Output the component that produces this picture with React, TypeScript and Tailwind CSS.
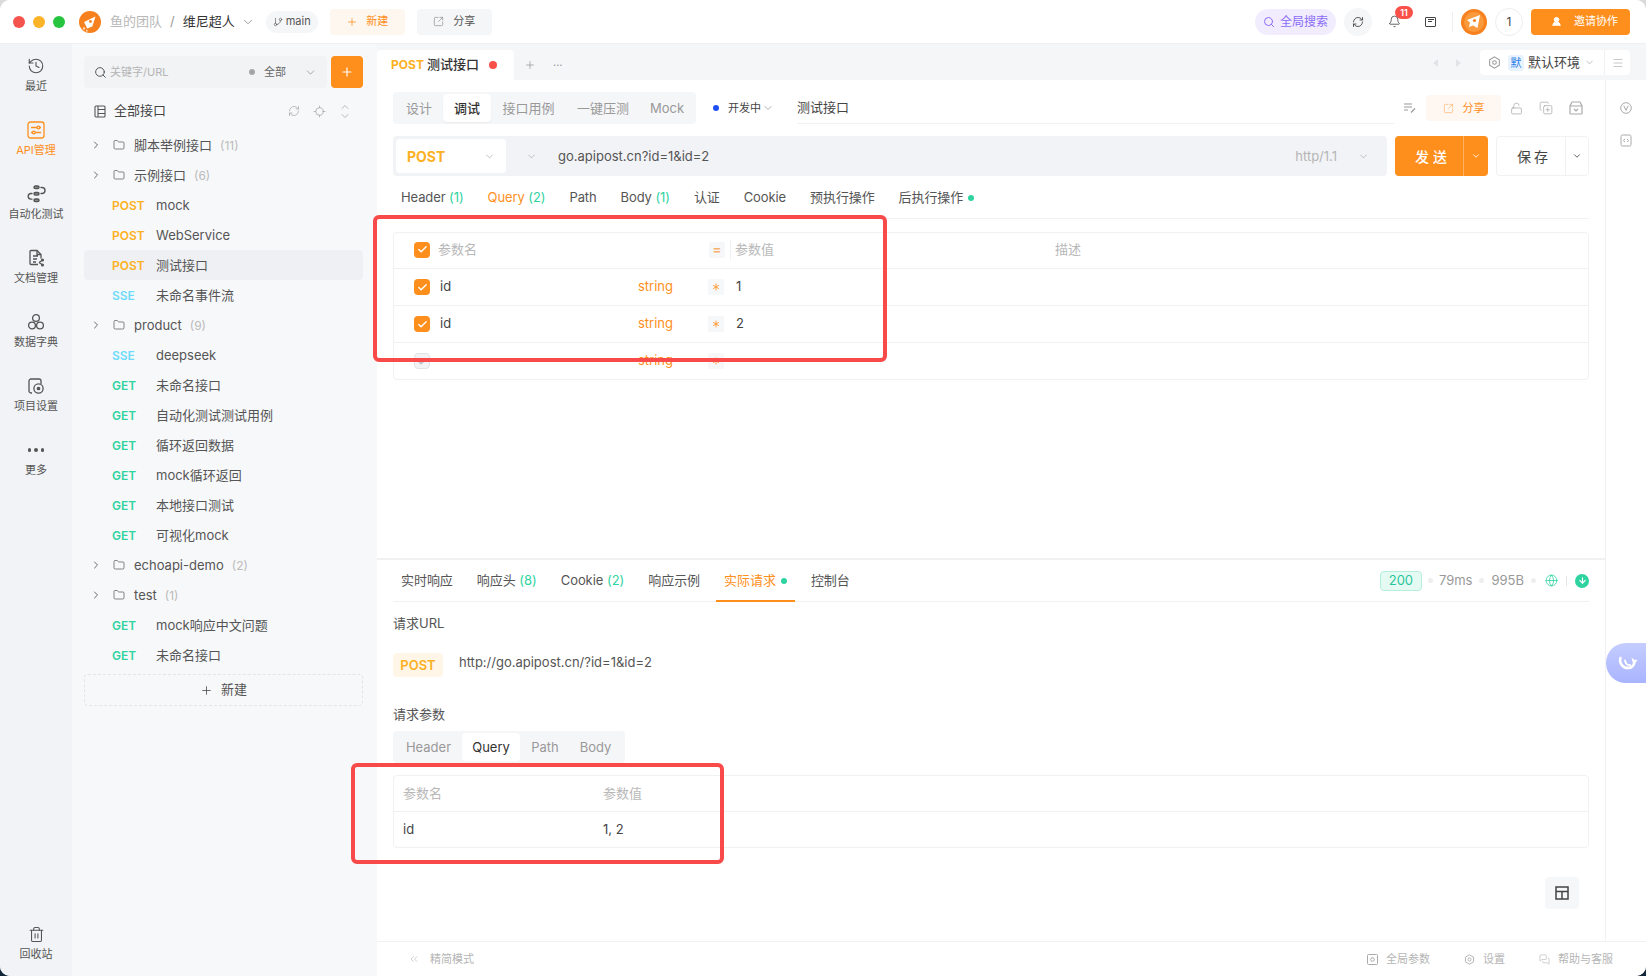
import {
  Asterisk, Bell, Check, ChevronDown, ChevronRight, ChevronsLeft, ChevronUp, CopyPlus, Folder, GitBranch, Globe, History,
  LockOpen, Menu, MessagesSquare, Plus, RefreshCw, Search, SquareArrowOutUpRight, Trash2, ArrowDown, Locate, UserRound,
} from 'lucide-react';

const ORANGE = 'bg-[#ff8f1c]';

const Logo = ({ size = 22 }: { size?: number }) => (
  <svg width={size} height={size} viewBox="0 0 24 24">
    <circle cx="12" cy="12" r="12" fill="#f7811e" />
    <path d="M18 6 L14.500 17 L9 19 L5.500 12 Z" fill="#fff" />
    <circle cx="12.500" cy="11.500" r="1.600" fill="#f7811e" />
    <circle cx="5.500" cy="19" r="1.300" fill="#ffd9b3" />
    <circle cx="8.500" cy="21.500" r="1.100" fill="#ffd9b3" />
  </svg>
);

const Avatar = () => (
  <svg width="26" height="26" viewBox="0 0 26 26">
    <circle cx="13" cy="13" r="13" fill="#f7811e" />
    <circle cx="13" cy="13" r="10" fill="#fb9a3c" />
    <path d="M19 6 L16.500 19 L12 16.500 L8 18 L9 13.500 L6 11 Z" fill="#fff" />
    <circle cx="13.500" cy="11.500" r="1.600" fill="#f7811e" />
  </svg>
);

const ApiIcon = () => (
  <svg width="18" height="18" viewBox="0 0 18 18" fill="none" stroke="#ff8f1c" strokeWidth="1.3">
    <rect x="1" y="1" width="16" height="16" rx="2.5" />
    <path d="M4 6.5h6M12.8 6.5H14M4 11.5h1.4M8.2 11.5H14" />
    <circle cx="11.4" cy="6.5" r="1.4" />
    <circle cx="6.8" cy="11.5" r="1.4" />
  </svg>
);

const AutoIcon = () => (
  <svg width="20" height="18" viewBox="0 0 20 18" fill="none" stroke="#555" strokeWidth="1.4" strokeLinecap="round">
    <rect x="8" y="1" width="5" height="2.6" rx="1.3" fill="#888" />
    <rect x="8" y="7.5" width="5" height="2.6" rx="1.3" fill="#888" />
    <rect x="8" y="14" width="5" height="2.6" rx="1.3" fill="#888" />
    <path d="M6 8.5H5a2.8 2.8 0 0 0 0 5.6h1M15 2.5h1a3 3 0 0 1 0 6h-1" />
  </svg>
);

const DocIcon = () => (
  <svg width="18" height="18" viewBox="0 0 18 18" fill="none" stroke="#555" strokeWidth="1.3">
    <path d="M11 15.500H4a1 1 0 0 1-1-1v-12a1 1 0 0 1 1-1h6l4 4v4" />
    <path d="M10 1.500v4h4M6 7h5M6 10h4M6 13h3" />
    <path d="M12 13.500l3-2M12 13.500l3 2" />
    <circle cx="15.500" cy="11" r="0.900" fill="#555" />
    <circle cx="15.500" cy="16" r="0.900" fill="#555" />
  </svg>
);

const DictIcon = () => (
  <svg width="18" height="18" viewBox="0 0 18 18" fill="none" stroke="#555" strokeWidth="1.3">
    <circle cx="9" cy="5" r="3.4" />
    <circle cx="5" cy="12.5" r="3.4" />
    <circle cx="13" cy="12.5" r="3.4" />
  </svg>
);

const ProjectIcon = () => (
  <svg width="18" height="18" viewBox="0 0 18 18" fill="none" stroke="#555" strokeWidth="1.3">
    <path d="M5 16H4a2 2 0 0 1-2-2V4a2 2 0 0 1 2-2h8a2 2 0 0 1 2 2v3" />
    <circle cx="11.5" cy="11.5" r="4.6" />
    <circle cx="11.5" cy="11.5" r="1.2" fill="#555" />
  </svg>
);

const AllApis = () => (
  <svg width="12" height="13" viewBox="0 0 12 13" fill="none" stroke="#555" strokeWidth="1.1">
    <rect x="1" y="1" width="10" height="11" rx="1" />
    <path d="M4 1v11M4 4.5h7M4 8.5h7" />
  </svg>
);

const EditLines = () => (
  <svg width="14" height="12" viewBox="0 0 14 12" fill="none" stroke="#999" strokeWidth="1.2">
    <path d="M1 2h8M1 5h8M1 8h4M8 10.5l4-4" />
  </svg>
);

const ArchiveCheck = () => (
  <svg width="14" height="14" viewBox="0 0 14 14" fill="none" stroke="#aaa" strokeWidth="1.2">
    <path d="M3 1h8l2 4v7a1 1 0 0 1-1 1H2a1 1 0 0 1-1-1V5zM1 5h12M5 8l2 2 2-2" />
  </svg>
);

const HexDot = ({ size = 13, color = '#999' }: { size?: number; color?: string }) => (
  <svg width={size} height={size} viewBox="0 0 14 14" fill="none" stroke={color} strokeWidth="1.1">
    <path d="M7 1l5.2 3v6L7 13l-5.2-3V4z" />
    <circle cx="7" cy="7" r="2" />
  </svg>
);

const VCircle = () => (
  <svg width="12" height="12" viewBox="0 0 12 12" fill="none" stroke="#aaa" strokeWidth="1">
    <circle cx="6" cy="6" r="5.3" />
    <path d="M3.8 3.6L6 8.4l2.2-4.8" />
  </svg>
);

const CodeBox = () => (
  <svg width="12" height="13" viewBox="0 0 12 13" fill="none" stroke="#aaa" strokeWidth="1">
    <rect x="1" y="1" width="10" height="11" rx="1.5" />
    <path d="M5 5L3.4 6.5 5 8M7 5l1.6 1.5L7 8" />
  </svg>
);

const ParamsIcon = () => (
  <svg width="11" height="11" viewBox="0 0 11 11" fill="none" stroke="#aaa" strokeWidth="1">
    <rect x="0.5" y="0.5" width="10" height="10" rx="1" />
    <circle cx="5.5" cy="5.5" r="1.8" />
  </svg>
);

const Whale = () => (
  <svg width="20" height="16" viewBox="0 0 20 16" fill="none">
    <path d="M2.500 3c-1.500 5 2 10 7.500 10 3.500 0 6-2.500 6.500-6.500" stroke="#fff" strokeWidth="2.600" strokeLinecap="round" />
    <path d="M7 5.500c.5 3 2.500 5 5 4.500" stroke="#fff" strokeWidth="1.800" strokeLinecap="round" />
    <path d="M14.500 7 L13.500 2.500 L16.500 5 L19.500 4.500 L17.500 8 Z" fill="#fff" />
  </svg>
);

const Layout = () => (
  <svg width="14" height="14" viewBox="0 0 14 14" fill="none" stroke="#444" strokeWidth="1.5">
    <rect x="1" y="1" width="12" height="12" />
    <path d="M1 5.5h12M7 5.5V13" />
  </svg>
);

const railItems = [
  { label: '最近', icon: <History size={18} strokeWidth={1.5} color="#555" /> },
  { label: 'API管理', icon: <ApiIcon />, active: true },
  { label: '自动化测试', icon: <AutoIcon /> },
  { label: '文档管理', icon: <DocIcon /> },
  { label: '数据字典', icon: <DictIcon /> },
  { label: '项目设置', icon: <ProjectIcon /> },
  { label: '更多', icon: <span className="flex gap-[3px]"><i className="w-[3.5px] h-[3.5px] rounded-full bg-[#555]" /><i className="w-[3.5px] h-[3.5px] rounded-full bg-[#555]" /><i className="w-[3.5px] h-[3.5px] rounded-full bg-[#555]" /></span> },
];

type TreeRow =
  | { kind: 'folder'; name: string; count: number }
  | { kind: 'api'; method: 'POST' | 'GET' | 'SSE'; name: string; active?: boolean };

const tree: TreeRow[] = [
  { kind: 'folder', name: '脚本举例接口', count: 11 },
  { kind: 'folder', name: '示例接口', count: 6 },
  { kind: 'api', method: 'POST', name: 'mock' },
  { kind: 'api', method: 'POST', name: 'WebService' },
  { kind: 'api', method: 'POST', name: '测试接口', active: true },
  { kind: 'api', method: 'SSE', name: '未命名事件流' },
  { kind: 'folder', name: 'product', count: 9 },
  { kind: 'api', method: 'SSE', name: 'deepseek' },
  { kind: 'api', method: 'GET', name: '未命名接口' },
  { kind: 'api', method: 'GET', name: '自动化测试测试用例' },
  { kind: 'api', method: 'GET', name: '循环返回数据' },
  { kind: 'api', method: 'GET', name: 'mock循环返回' },
  { kind: 'api', method: 'GET', name: '本地接口测试' },
  { kind: 'api', method: 'GET', name: '可视化mock' },
  { kind: 'folder', name: 'echoapi-demo', count: 2 },
  { kind: 'folder', name: 'test', count: 1 },
  { kind: 'api', method: 'GET', name: 'mock响应中文问题' },
  { kind: 'api', method: 'GET', name: '未命名接口' },
];

const methodColor = { POST: 'text-[#fdb022]', GET: 'text-[#2fd3a0]', SSE: 'text-[#6ddcfb]' };

const TopBar = () => (
  <header className="h-[44px] shrink-0 flex items-center border-b border-[#eff0f2] bg-white pl-[13px] pr-4">
    <div className="flex gap-[8px]">
      <span className="w-3 h-3 rounded-full bg-[#f4544d]" />
      <span className="w-3 h-3 rounded-full bg-[#fbb328]" />
      <span className="w-3 h-3 rounded-full bg-[#27c43f]" />
    </div>
    <span className="ml-[14px]"><Logo /></span>
    <span className="ml-[9px] text-[13px] text-[#b8b8b8]">鱼的团队</span>
    <span className="ml-[8px] text-[13px] text-[#999]">/</span>
    <span className="ml-[8px] text-[13px] text-[#333]">维尼超人</span>
    <ChevronDown size={14} strokeWidth={1.4} color="#888" className="ml-[6px]" />
    <div className="ml-[11px] h-[22px] w-[52px] rounded-full bg-[#f5f6f8] flex items-center pl-[7px] gap-[3px] text-[11px] text-[#555]">
      <GitBranch size={10} strokeWidth={1.5} />main
    </div>
    <div className="ml-[12px] h-[26px] w-[75px] rounded bg-[#fef7ef] flex items-center justify-center gap-[8px] text-[11px] text-[#ff8f1c]">
      <Plus size={12} strokeWidth={1.5} />新建
    </div>
    <div className="ml-[12px] h-[26px] w-[75px] rounded bg-[#f5f6f8] flex items-center justify-center gap-[9px] text-[11px] text-[#555]">
      <SquareArrowOutUpRight size={11} strokeWidth={1.4} color="#888" />分享
    </div>
    <div className="flex-1" />
    <div className="h-[26px] w-[81px] rounded-full bg-[#f1edfe] flex items-center justify-center gap-[5px] text-[12px] text-[#8b6cf6]">
      <Search size={12} strokeWidth={2} />全局搜索
    </div>
    <div className="ml-[8px] w-7 h-7 rounded-full bg-[#f5f6f8] flex items-center justify-center">
      <RefreshCw size={12} strokeWidth={1.6} color="#333" />
    </div>
    <div className="relative ml-[14px] w-[16px] flex justify-center">
      <Bell size={13} strokeWidth={1.4} color="#333" />
      <span className="absolute left-[9px] -top-[9px] h-[13px] w-[18px] rounded-full bg-[#f9514a] text-white text-[9px] leading-[13px] text-center font-semibold">11</span>
    </div>
    <div className="ml-[23px] w-[11px] h-[10px] border border-[#444] rounded-[1px] flex flex-col gap-[1px] p-[1.5px]">
      <i className="h-px bg-[#444]" /><i className="h-px w-2/3 bg-[#444]" />
    </div>
    <div className="ml-[16px] h-5 w-px bg-[#eee]" />
    <span className="ml-[8px]"><Avatar /></span>
    <div className="ml-[8px] w-7 h-7 rounded-full border border-[#eee] flex items-center justify-center text-[12px] text-[#444]">1</div>
    <div className={`ml-[8px] h-[26px] w-[99px] rounded ${ORANGE} flex items-center pl-[20px] gap-[12px] text-[11px] text-white`}>
      <UserRound size={11} strokeWidth={2} fill="#fff" />邀请协作
    </div>
  </header>
);

const Rail = () => (
  <nav className="w-[72px] shrink-0 bg-[#f1f3f6] flex flex-col justify-between pt-[12px] pb-[14px]">
    <div>
      {railItems.map((item) => (
        <div key={item.label} className="h-16 flex flex-col items-center">
          <div className="h-5 flex items-center justify-center">{item.icon}</div>
          <span className={`mt-[2px] leading-4 text-[11px] ${item.active ? 'text-[#ff8f1c]' : 'text-[#555]'}`}>{item.label}</span>
        </div>
      ))}
    </div>
    <div className="flex flex-col items-center">
      <div className="h-5 flex items-center justify-center"><Trash2 size={17} strokeWidth={1.5} color="#555" /></div>
      <span className="mt-[2px] leading-4 text-[11px] text-[#555]">回收站</span>
    </div>
  </nav>
);

const Tree = () => (
  <aside className="w-[305px] shrink-0 bg-[#f7f8fa] pt-3 pl-3 pr-[14px]">
    <div className="flex gap-1">
      <div className="flex-1 h-8 rounded bg-[#f2f3f5] flex items-center pl-[10px] pr-[10px]">
        <Search size={13} strokeWidth={1.6} color="#444" />
        <span className="ml-[3px] pt-px text-[11px] text-[#b5b5b5]">关键字/URL</span>
        <span className="ml-auto w-[6px] h-[6px] rounded-full bg-[#a5a5a5]" />
        <span className="ml-[9px] pt-px text-[11px] text-[#666]">全部</span>
        <ChevronDown size={13} strokeWidth={1.3} color="#888" className="ml-[18px]" />
      </div>
      <div className={`w-8 h-8 rounded ${ORANGE} flex items-center justify-center`}>
        <Plus size={14} strokeWidth={2} color="#fff" />
      </div>
    </div>
    <div className="mt-2 h-[30px] flex items-center pl-[10px] pr-[12px]">
      <AllApis />
      <span className="ml-[8px] text-[13px] text-[#444]">全部接口</span>
      <RefreshCw size={12} strokeWidth={1.5} color="#aaa" className="ml-auto" />
      <Locate size={13} strokeWidth={1.5} color="#aaa" className="ml-[13px]" />
      <span className="ml-[13px] flex flex-col -space-y-[3px]">
        <ChevronUp size={12} strokeWidth={1.6} color="#aaa" />
        <ChevronDown size={12} strokeWidth={1.6} color="#aaa" />
      </span>
    </div>
    <div className="mt-1">
      {tree.map((row, i) =>
        row.kind === 'folder' ? (
          <div key={i} className="h-[30px] flex items-center pl-[6px]">
            <ChevronRight size={12} strokeWidth={1.6} color="#444" />
            <Folder size={12} strokeWidth={1.4} color="#555" className="ml-[11px]" />
            <span className="ml-[9px] pt-px text-[13px] text-[#555]">{row.name}</span>
            <span className="ml-[8px] pt-px text-[12px] text-[#bbb]">({row.count})</span>
          </div>
        ) : (
          <div key={i} className={`h-[30px] flex items-center pl-7 pt-px rounded ${row.active ? 'bg-[#eef0f3]' : ''}`}>
            <span className={`w-[44px] text-[12px] font-semibold ${methodColor[row.method]}`}>{row.method}</span>
            <span className="text-[13px] text-[#555]">{row.name}</span>
          </div>
        ),
      )}
    </div>
    <div className="mt-1 h-8 rounded border border-dashed border-[#e4e5e8] flex items-center justify-center gap-2 text-[13px] text-[#555]">
      <Plus size={13} strokeWidth={1.6} />新建
    </div>
  </aside>
);

const Small = ({ children }: { children: React.ReactNode }) => <span className="text-[#2fd3a0]"> {children}</span>;

const Dot = () => <span className="w-[6px] h-[6px] rounded-full bg-[#2fd3a0] inline-block" />;

const paramTabs: { label: string; n?: number; active?: boolean; dot?: boolean }[] = [
  { label: 'Header', n: 1 },
  { label: 'Query', n: 2, active: true },
  { label: 'Path' },
  { label: 'Body', n: 1 },
  { label: '认证' },
  { label: 'Cookie' },
  { label: '预执行操作' },
  { label: '后执行操作', dot: true },
];

const respTabs: { label: string; n?: number; active?: boolean; dot?: boolean }[] = [
  { label: '实时响应' },
  { label: '响应头', n: 8 },
  { label: 'Cookie', n: 2 },
  { label: '响应示例' },
  { label: '实际请求', active: true, dot: true },
  { label: '控制台' },
];

const CheckBox = ({ off }: { off?: boolean }) => (
  <span className={`w-4 h-4 rounded-[4px] flex items-center justify-center ${off ? 'bg-[#f2f3f5] border border-[#e2e3e6]' : ORANGE}`}>
    <Check size={11} strokeWidth={3} color={off ? '#bbb' : '#fff'} />
  </span>
);

const Star = () => (
  <span className="w-4 h-4 rounded-[2px] bg-[#f6f7f9] flex items-center justify-center">
    <Asterisk size={12} strokeWidth={1.6} color="#ff8f1c" />
  </span>
);

const ParamRow = ({ value, off }: { value?: string; off?: boolean }) => (
  <div className="h-[37px] flex items-center border-t border-[#f0f1f3]">
    <div className="w-[244px] pl-5 flex items-center">
      <CheckBox off={off} />
      {value && <span className="ml-[10px] text-[13px] text-[#444]">id</span>}
    </div>
    <span className="w-[70px] text-[13px] text-[#ff8f1c]">string</span>
    <Star />
    <span className="ml-3 text-[13px] text-[#444]">{value}</span>
  </div>
);

const RequestPanel = () => (
  <section className="h-[478px] shrink-0 px-4 pt-3">
    <div className="h-8 flex items-center">
      <div className="h-8 w-[303px] rounded bg-[#f5f6f8] p-[2px] flex text-[13px] text-[#999] text-center leading-7">
        <span className="w-[48px]">设计</span>
        <span className="w-[48px] bg-white rounded text-[#333] font-medium shadow-[0_1px_2px_rgba(0,0,0,0.05)]">调试</span>
        <span className="w-[75px]">接口用例</span>
        <span className="w-[74px]">一键压测</span>
        <span className="w-[54px]">Mock</span>
      </div>
      <span className="ml-[17px] w-[6px] h-[6px] rounded-full bg-[#1f4ff2]" />
      <span className="ml-[9px] text-[11px] text-[#444]">开发中</span>
      <ChevronDown size={12} strokeWidth={1.3} color="#888" className="ml-[1px]" />
      <div className="ml-[23px] w-[597px] h-8 flex items-center border-b border-[#f0f1f3] text-[13px] text-[#444]">测试接口</div>
      <span className="ml-[9px]"><EditLines /></span>
      <div className="ml-[9px] w-[75px] h-[26px] rounded bg-[#fef7f2] flex items-center justify-center gap-[9px] text-[11px] text-[#ff8f1c]">
        <SquareArrowOutUpRight size={11} strokeWidth={1.4} color="#ffb066" />分享
      </div>
      <LockOpen size={13} strokeWidth={1.4} color="#aaa" className="ml-[9px]" />
      <CopyPlus size={14} strokeWidth={1.3} color="#aaa" className="ml-[16px]" />
      <span className="ml-[16px]"><ArchiveCheck /></span>
    </div>

    <div className="mt-3 flex h-10">
      <div className="w-[994px] rounded bg-[#f2f3f6] flex items-center pl-[3px] pr-[18px]">
        <div className="w-[110px] h-[34px] rounded bg-white flex items-center pl-[11px] pr-[11px]">
          <span className="text-[14px] font-bold text-[#fdb022]">POST</span>
          <ChevronDown size={11} strokeWidth={1.3} color="#999" className="ml-auto" />
        </div>
        <ChevronDown size={11} strokeWidth={1.3} color="#999" className="ml-[20px]" />
        <span className="ml-[21px] pt-px text-[13px] text-[#555]">go.apipost.cn?id=1&amp;id=2</span>
        <span className="ml-auto pt-px text-[13px] text-[#b5b5b5]">http/1.1</span>
        <ChevronDown size={11} strokeWidth={1.3} color="#999" className="ml-[21px]" />
      </div>
      <div className={`ml-2 w-[93px] rounded ${ORANGE} flex text-white`}>
        <span className="w-[69px] pl-[8px] flex items-center justify-center text-[14px] tracking-[4px] font-medium border-r border-[#ffb060]">发送</span>
        <span className="flex-1 flex items-center justify-center"><ChevronDown size={10} strokeWidth={2} /></span>
      </div>
      <div className="ml-2 w-[93px] rounded border border-[#f0f1f3] flex text-[#444]">
        <span className="w-[69px] pl-[6px] flex items-center justify-center text-[14px] tracking-[3px] border-r border-[#f0f1f3]">保存</span>
        <span className="flex-1 flex items-center justify-center"><ChevronDown size={10} strokeWidth={2} /></span>
      </div>
    </div>

    <div className="h-[43px] pt-px flex items-center gap-2 border-b border-[#f0f1f3] tracking-[-0.1px]">
      {paramTabs.map((t) => (
        <div key={t.label} className={`px-2 text-[13px] flex items-center gap-[5px] whitespace-pre ${t.active ? 'text-[#ff8f1c]' : 'text-[#555]'}`}>
          <span>{t.label}{t.n !== undefined && <Small>({t.n})</Small>}</span>
          {t.dot && <Dot />}
        </div>
      ))}
    </div>

    <div className="mt-[13px] rounded border border-[#f0f1f3]">
      <div className="h-[35px] pb-[2px] flex items-center">
        <div className="w-[244px] pl-5 flex items-center">
          <CheckBox />
          <span className="ml-[8px] text-[13px] text-[#b8b8b8]">参数名</span>
        </div>
        <span className="w-[71px]" />
        <span className="w-4 h-4 rounded-[2px] bg-[#f6f7f9] flex items-center justify-center text-[13px] font-bold text-[#f7b06c]">=</span>
        <span className="ml-[5px] h-5 w-px bg-[#f0f1f3]" />
        <span className="ml-[4px] w-[320px] text-[13px] text-[#b8b8b8]">参数值</span>
        <span className="text-[13px] text-[#b8b8b8]">描述</span>
      </div>
      <ParamRow value="1" />
      <ParamRow value="2" />
      <ParamRow off />
    </div>
  </section>
);

const ResponsePanel = () => (
  <section className="flex-1 border-t-2 border-[#f0f1f3] px-4 relative">
    <div className="h-[42px] flex items-stretch gap-2 border-b border-[#f0f1f3] tracking-[-0.05px]">
      {respTabs.map((t) => (
        <div key={t.label} className={`px-2 pt-px text-[13px] flex items-center gap-[5px] whitespace-pre -mb-px border-b-2 ${t.active ? 'text-[#ff8f1c] border-[#ff8f1c]' : 'text-[#555] border-transparent'}`}>
          <span>{t.label}{t.n !== undefined && <Small>({t.n})</Small>}</span>
          {t.dot && <Dot />}
        </div>
      ))}
      <div className="ml-auto flex items-center text-[13px] text-[#999] tracking-normal">
        <span className="w-[42px] h-5 rounded bg-[#e6faf4] border border-[#b5efdc] text-[#28c79b] flex items-center justify-center">200</span>
        <span className="ml-[6px] mr-[6px] w-[5px] h-[5px] rounded-full bg-[#eee]" />79ms
        <span className="mx-[7px] w-[5px] h-[5px] rounded-full bg-[#eee]" />995B
        <span className="ml-[7px] mr-[9px] w-[5px] h-[5px] rounded-full bg-[#eee]" />
        <Globe size={13} strokeWidth={1.5} color="#2fd3a0" />
        <span className="ml-[8px] h-[10px] w-px bg-[#e5e5e5]" />
        <span className="ml-[8px] w-[14px] h-[14px] rounded-full bg-[#2fd3a0] flex items-center justify-center"><ArrowDown size={9} strokeWidth={3} color="#fff" /></span>
      </div>
    </div>

    <div className="mt-[11px] leading-5 text-[13px] text-[#555]">请求URL</div>
    <div className="mt-5 flex">
      <span className="w-[50px] h-6 rounded bg-[#fff6e8] text-[13px] leading-6 font-semibold text-center text-[#fdb022]">POST</span>
      <span className="ml-4 -mt-[3px] leading-6 text-[13px] text-[#555]">http://go.apipost.cn/?id=1&amp;id=2</span>
    </div>
    <div className="mt-[27px] leading-5 text-[13px] text-[#555]">请求参数</div>
    <div className="mt-[7px] h-8 w-[232px] rounded bg-[#f5f6f8] p-[2px] flex text-[13px] text-[#999] text-center leading-7">
      <span className="w-[67px]">Header</span>
      <span className="w-[58px] bg-white rounded text-[#333]">Query</span>
      <span className="w-[50px]">Path</span>
      <span className="w-[51px]">Body</span>
    </div>
    <div className="mt-3 rounded border border-[#f0f1f3] text-[13px]">
      <div className="h-[35px] flex items-center pl-[9px] text-[#b8b8b8]">
        <span className="w-[200px]">参数名</span>参数值
      </div>
      <div className="h-[36px] flex items-center pl-[9px] text-[#444] border-t border-[#f0f1f3]">
        <span className="w-[200px]">id</span>1, 2
      </div>
    </div>
    <div className="absolute right-[26px] top-[317px] w-[34px] h-[32px] rounded bg-[#f6f7f9] flex items-center justify-center">
      <Layout />
    </div>
  </section>
);

const Footer = () => (
  <footer className="h-[35px] shrink-0 border-t border-[#f0f1f3] flex items-center pl-[31px] pr-[33px] text-[11px] text-[#b5b5b5]">
    <ChevronsLeft size={12} strokeWidth={1.2} />
    <span className="ml-[10px] pt-px">精简模式</span>
    <span className="ml-auto"><ParamsIcon /></span>
    <span className="ml-[8px] pt-px">全局参数</span>
    <span className="ml-[34px]"><HexDot size={11} color="#aaa" /></span>
    <span className="ml-[8px] pt-px">设置</span>
    <MessagesSquare size={11} strokeWidth={1.4} className="ml-[34px]" />
    <span className="ml-[8px] pt-px">帮助与客服</span>
  </footer>
);

const Main = () => (
  <main className="flex-1 min-w-0 flex flex-col bg-white">
    <div className="h-[36px] shrink-0 bg-[#f5f6f8] pt-[6px] flex items-center pr-4">
      <div className="w-[137px] h-[30px] bg-white rounded-t flex items-center pl-[14px]">
        <span className="text-[12px] font-bold text-[#fdb022]">POST</span>
        <span className="ml-[3px] text-[13px] text-[#333] font-medium">测试接口</span>
        <span className="ml-[10px] w-2 h-2 rounded-full bg-[#f9514a]" />
      </div>
      <Plus size={12} strokeWidth={1.5} color="#999" className="ml-[10px]" />
      <span className="ml-[17px] text-[11px] text-[#999] leading-3">···</span>
      <span className="ml-auto -mt-[5px] w-0 h-0 border-y-[4px] border-y-transparent border-r-[5px] border-r-[#e2e3e6]" />
      <span className="ml-[18px] -mt-[5px] w-0 h-0 border-y-[4px] border-y-transparent border-l-[5px] border-l-[#e2e3e6]" />
      <div className="ml-[19px] -mt-[5px] w-[150px] h-[25px] rounded bg-white flex items-center pl-[8px] text-[13px] text-[#444]">
        <HexDot />
        <span className="ml-[7px] w-4 h-4 rounded-[3px] bg-[#e8f3ff] text-[#2b7fe8] text-[11px] leading-4 text-center">默</span>
        <span className="ml-1">默认环境</span>
        <ChevronDown size={11} strokeWidth={1.3} color="#999" className="ml-[4px]" />
        <span className="ml-[9px] h-full border-l border-[#f0f1f3] flex-1 flex items-center justify-center">
          <Menu size={12} strokeWidth={1.6} color="#bbb" />
        </span>
      </div>
    </div>
    <div className="flex-1 min-h-0 flex">
      <div className="w-[1228px] flex flex-col">
        <RequestPanel />
        <ResponsePanel />
      </div>
      <div className="flex-1 border-l border-[#f0f1f3] flex flex-col items-center pt-[22px] gap-[20px]">
        <VCircle />
        <CodeBox />
      </div>
    </div>
    <Footer />
  </main>
);

export default function App() {
  return (
    <div className="w-[1646px] h-[976px] bg-[linear-gradient(#d9dadc_50%,#12263a_50%)] font-['Inter','Noto_Sans_CJK_SC',sans-serif] relative">
      <div className="w-full h-full rounded-[10px] overflow-hidden bg-white flex flex-col">
        <TopBar />
        <div className="flex-1 min-h-0 flex">
          <Rail />
          <Tree />
          <Main />
        </div>
      </div>
      {/* annotations and floating bits */}
      <div className="absolute left-[373px] top-[215px] w-[514px] h-[147px] border-4 border-[#f94a4a] rounded-[6px]" />
      <div className="absolute left-[351px] top-[763px] w-[373px] h-[101px] border-4 border-[#f94a4a] rounded-[6px]" />
      <div className="absolute left-[1606px] top-[643px] w-[40px] h-[40px] rounded-l-full bg-[linear-gradient(#c5cdff,#a9b4ff)] flex items-center justify-center pl-1">
        <Whale />
      </div>
    </div>
  );
}
